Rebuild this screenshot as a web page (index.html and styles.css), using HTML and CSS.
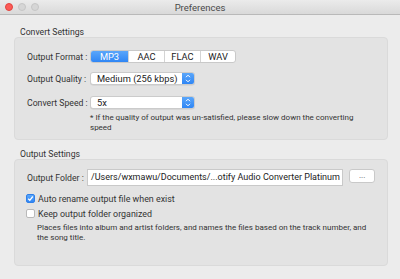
FILE: index.html
```html
<!DOCTYPE html>
<html lang="en">
<head>
  <meta charset="UTF-8" />
  <title>Preferences</title>
  <link rel="stylesheet" href="styles.css">
</head>
<body>
  <div class="window">
    <div class="titlebar">
      <div class="lights">
        <span class="light close"></span>
        <span class="light"></span>
        <span class="light"></span>
      </div>
      <div class="title">Preferences</div>
    </div>

    <div class="section">
      <div class="section-label">Convert Settings</div>
      <div class="box box-convert">
        <div class="row">
          <span class="label">Output Format :</span>
          <div class="segmented">
            <span class="seg active">MP3</span>
            <span class="seg">AAC</span>
            <span class="seg">FLAC</span>
            <span class="seg">WAV</span>
          </div>
        </div>
        <div class="row">
          <span class="label">Output Quality :</span>
          <div class="popup">
            <span class="popup-text">Medium (256 kbps)</span>
            <span class="popup-arrow">
              <svg width="6" height="9" viewBox="0 0 6 9"><path d="M1 3.2 L3 1.2 L5 3.2 M1 5.8 L3 7.8 L5 5.8" fill="none" stroke="#fff" stroke-width="1"/></svg>
            </span>
          </div>
        </div>
        <div class="row">
          <span class="label">Convert Speed :</span>
          <div class="popup">
            <span class="popup-text">5x</span>
            <span class="popup-arrow">
              <svg width="6" height="9" viewBox="0 0 6 9"><path d="M1 3.2 L3 1.2 L5 3.2 M1 5.8 L3 7.8 L5 5.8" fill="none" stroke="#fff" stroke-width="1"/></svg>
            </span>
          </div>
        </div>
        <p class="note">* If the quality of output was un-satisfied, please slow down the converting speed</p>
      </div>
    </div>

    <div class="section">
      <div class="section-label">Output Settings</div>
      <div class="box box-output">
        <div class="row">
          <span class="label label-folder">Output Folder :</span>
          <div class="field">/Users/wxmawu/Documents/...otify Audio Converter Platinum</div>
          <button class="browse">...</button>
        </div>
        <label class="check">
          <span class="box-check checked">
            <svg width="7" height="7" viewBox="0 0 7 7"><path d="M1.2 3.8 L2.8 5.3 L5.8 1.5" fill="none" stroke="#fff" stroke-width="1.3"/></svg>
          </span>
          Auto rename output file when exist
        </label>
        <label class="check">
          <span class="box-check"></span>
          Keep output folder organized
        </label>
        <p class="desc">Places files into album and artist folders, and names the files based on the track number, and the song title.</p>
      </div>
    </div>
  </div>
</body>
</html>
```

FILE: styles.css
```css
* {
  box-sizing: border-box;
}
body {
  margin: 0;
  font-family: Roboto, "Liberation Sans", sans-serif;
  font-size: 8.7px;
  color: #2b2b2b;
  background: #ececec;
}

.window {
  width: 400px;
  height: 279px;
  background: #ececec;
  overflow: hidden;
}

/* Title bar */
.titlebar {
  position: relative;
  height: 15px;
  background: linear-gradient(#ebebeb, #d9d9d9);
  border-bottom: 1px solid #b9b9b9;
  display: flex;
  align-items: center;
  justify-content: center;
}
.lights {
  position: absolute;
  left: 5px;
  top: 3px;
  display: flex;
  gap: 5px;
}
.light {
  width: 8px;
  height: 8px;
  border-radius: 50%;
  background: #d6d6d6;
  border: 1px solid #c6c6c6;
}
.light.close {
  background: #fc5b57;
  border-color: #e3433e;
}
.title {
  font-size: 9.5px;
  color: #4a4a4a;
}

/* Sections */
.section {
  padding: 0 12px 0 14px;
}
.section-label {
  padding-left: 6px;
  height: 10px;
  margin-top: 12px;
  line-height: 10px;
  color: #333;
}
.section + .section .section-label {
  margin-top: 9px;
}
.box {
  background: #e3e3e3;
  border: 1px solid #dadada;
  border-radius: 4px;
  padding: 12px 12px 0 12px;
}
.box-convert {
  height: 103px;
}
.box-output {
  height: 107px;
  padding-top: 9px;
}

.row {
  display: flex;
  align-items: center;
  margin-bottom: 9px;
}
.row:nth-child(2) {
  margin-bottom: 11px;
}
.row:nth-child(3) {
  margin-bottom: 0;
}
.label {
  width: 63px;
  flex-shrink: 0;
  color: #333;
}
.label-folder {
  width: 60px;
}

/* Segmented control */
.segmented {
  display: flex;
  height: 13px;
  border: 1px solid #c9c9c9;
  border-radius: 3px;
  background: #fff;
  overflow: hidden;
}
.seg {
  width: 36px;
  display: flex;
  align-items: center;
  justify-content: center;
  font-size: 9.3px;
  color: #222;
  border-left: 1px solid #d4d4d4;
}
.seg:first-child {
  width: 37px;
  border-left: none;
}
.seg:last-child {
  width: 35px;
}
.seg.active {
  background: linear-gradient(#5aa6fa, #2f86f5);
  color: #fff;
}

/* Popup buttons */
.popup {
  display: flex;
  width: 105px;
  height: 13px;
  background: #fff;
  border: 1px solid #cbcbcb;
  border-radius: 3px;
  overflow: hidden;
  box-shadow: 0 0.5px 0.5px rgb(0 0 0 / 0.1);
}
.popup-text {
  flex: 1;
  padding-left: 6px;
  line-height: 11px;
  font-size: 9.3px;
  color: #222;
}
.popup-arrow {
  width: 12px;
  background: linear-gradient(#5aa6fa, #2f86f5);
  display: flex;
  align-items: center;
  justify-content: center;
}

.note {
  margin: 4px 0 0 63px;
  font-size: 8px;
  line-height: 10px;
  color: #333;
}

/* Output folder */
.field {
  width: 258px;
  height: 17px;
  background: #fff;
  border: 1px solid #c9c9c9;
  padding-left: 3px;
  line-height: 15px;
  font-size: 9px;
  color: #222;
  white-space: nowrap;
  overflow: hidden;
}
.browse {
  margin-left: 6px;
  margin-bottom: 3px;
  width: 26px;
  height: 14px;
  padding: 0;
  background: #fff;
  border: 1px solid #c9c9c9;
  border-radius: 3px;
  font-size: 8px;
  line-height: 8px;
  color: #555;
  font-family: inherit;
}
.box-output .row {
  margin-bottom: 5px;
}

/* Checkboxes */
.check {
  display: flex;
  align-items: center;
  gap: 3px;
  height: 15px;
  margin-left: -1px;
  color: #333;
  font-size: 8.9px;
}
.box-check {
  width: 9px;
  height: 9px;
  border-radius: 2px;
  background: #fff;
  border: 1px solid #b9b9b9;
  display: flex;
  align-items: center;
  justify-content: center;
}
.box-check.checked {
  background: linear-gradient(#5aa6fa, #2f86f5);
  border-color: #2f7fe8;
}
.desc {
  margin: 2px 0 0 10px;
  font-size: 8px;
  line-height: 10px;
  color: #333;
}
```
